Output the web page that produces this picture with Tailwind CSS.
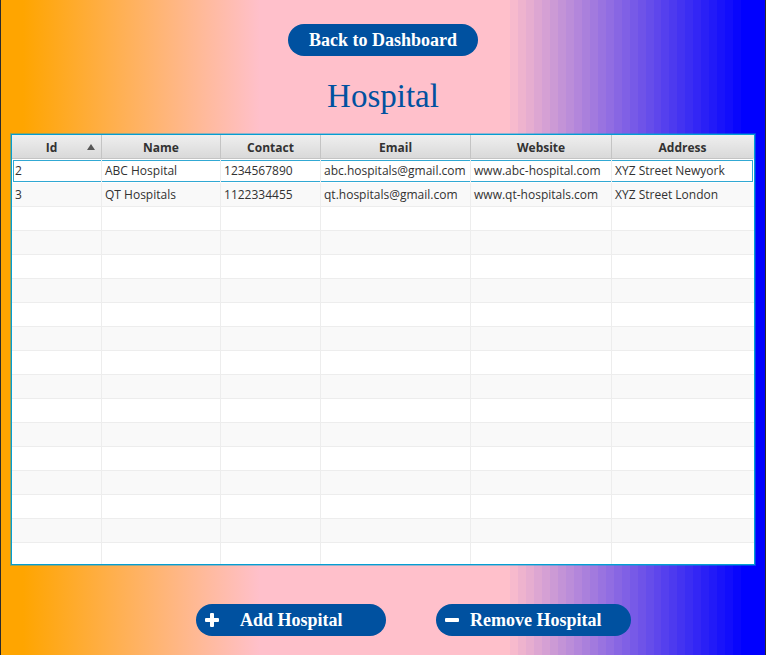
<!DOCTYPE html>
<html lang="en">
<head>
<meta charset="utf-8">
<meta name="viewport" content="width=device-width, initial-scale=1">
<title>Hospital</title>
<script src="https://cdn.jsdelivr.net/npm/@tailwindcss/browser@4"></script>
</head>
<body class="relative isolate min-h-screen border-x border-[#2b2b2b] bg-[linear-gradient(to_right,#ffa500_3%,#ffc0cb_34%)]">
<div id="fade" class="absolute inset-y-0 right-0 -z-10 flex w-1/3" aria-hidden="true"></div>
<main class="flex min-h-screen flex-col items-center px-[10px] pt-6 pb-[19px] font-['Liberation_Serif',serif]">
  <button type="button" class="h-8 w-[190px] shrink-0 rounded-full bg-[#0051a0] text-lg leading-8 font-bold text-white">Back to Dashboard</button>
  <h1 class="mt-5 text-[33px] leading-10 text-[#0051a0]">Hospital</h1>
  <div class="mt-[18px] flex h-[431px] w-full flex-col overflow-hidden border border-[#039ed3] bg-white font-['Open_Sans','Noto_Sans',sans-serif] text-xs text-[#323232] ring-1 ring-[#039ed3]/40">
    <table class="w-full table-fixed border-separate border-spacing-0">
      <colgroup><col class="w-[12.13%]"><col class="w-[16.04%]"><col class="w-[13.48%]"><col class="w-[20.22%]"><col class="w-[19%]"><col></colgroup>
      <thead>
        <tr id="head"></tr>
      </thead>
      <tbody id="rows"></tbody>
    </table>
  </div>
  <div class="mt-[39px] flex w-full justify-center gap-[50px] pl-[61px]">
    <button type="button" class="flex h-8 w-[190px] items-center rounded-full bg-[#0051a0] pl-2 text-lg leading-8 font-bold text-white">
      <svg class="h-4 w-4" viewBox="0 0 16 16" aria-hidden="true"><path d="M6 2q0-1 1-1h2q1 0 1 1v4h4q1 0 1 1v2q0 1-1 1h-4v4q0 1-1 1H7q-1 0-1-1v-4H2q-1 0-1-1V7q0-1 1-1h4z" fill="#fff"/></svg>
      <span class="ml-5">Add Hospital</span>
    </button>
    <button type="button" class="flex h-8 w-[195px] items-center rounded-full bg-[#0051a0] pl-2 text-lg leading-8 font-bold text-white">
      <svg class="h-4 w-4" viewBox="0 0 16 16" aria-hidden="true"><rect x="1" y="6" width="14" height="4" rx="1" fill="#fff"/></svg>
      <span class="ml-[10px]">Remove Hospital</span>
    </button>
  </div>
</main>
<script>
const columns = ["Id", "Name", "Contact", "Email", "Website", "Address"];
const hospitals = [
  ["2", "ABC Hospital", "1234567890", "abc.hospitals@gmail.com", "www.abc-hospital.com", "XYZ Street Newyork"],
  ["3", "QT Hospitals", "1122334455", "qt.hospitals@gmail.com", "www.qt-hospitals.com", "XYZ Street London"]
];
document.getElementById("head").innerHTML = columns.map((name, i) =>
  `<th scope="col" class="relative h-6 border-r border-b border-[#c4c4c4] bg-linear-to-b from-[#efefef] to-[#d9d9d9] p-0 pt-[2px] text-center leading-[21px] font-bold last:border-r-transparent ${i === 0 ? "pr-[10px]" : ""}">${name}${i === 0 ? '<svg class="absolute top-[9px] right-[6px] h-[6px] w-2" viewBox="0 0 8 6" aria-hidden="true"><path d="M4 0l4 6H0z" fill="#575757"/></svg>' : ""}</th>`).join("");
let body = "";
for (let r = 0; r < 17; r++) {
  const row = hospitals[r] || columns.map(() => "");
  const tone = r % 2 ? "bg-[#f9f9f9]" : "bg-white";
  body += "<tr>" + row.map((text, i) => {
    if (r === 0) {
      const side = i === 0 ? "ml-px border-l pl-px" : i === 5 ? "mr-px border-r pl-[3px]" : "pl-[3px]";
      return `<td class="h-6 border-r border-b border-r-[#ededed] border-b-white bg-white p-0 pt-px whitespace-nowrap last:border-r-0"><div class="h-[22px] border-y border-[#31a8d3] leading-5 ${side}">${text}</div></td>`;
    }
    return `<td class="h-6 border-r border-b border-[#ededed] p-0 pt-px pl-[3px] leading-[22px] whitespace-nowrap last:border-r-0 ${tone}">${text}</td>`;
  }).join("") + "</tr>";
}
document.getElementById("rows").innerHTML = body;
// Pink-to-blue fade, drawn as discrete bands.
const bands = 32;
document.getElementById("fade").innerHTML = Array.from({ length: bands }, (_, i) => {
  const t = Math.min(1, (i + 1) / 30);
  const c = [255 * (1 - t), 192 * (1 - t), 203 + 52 * t].map(Math.round);
  return `<i class="flex-1" style="background:rgb(${c})"></i>`;
}).join("");
</script>
</body>
</html>
